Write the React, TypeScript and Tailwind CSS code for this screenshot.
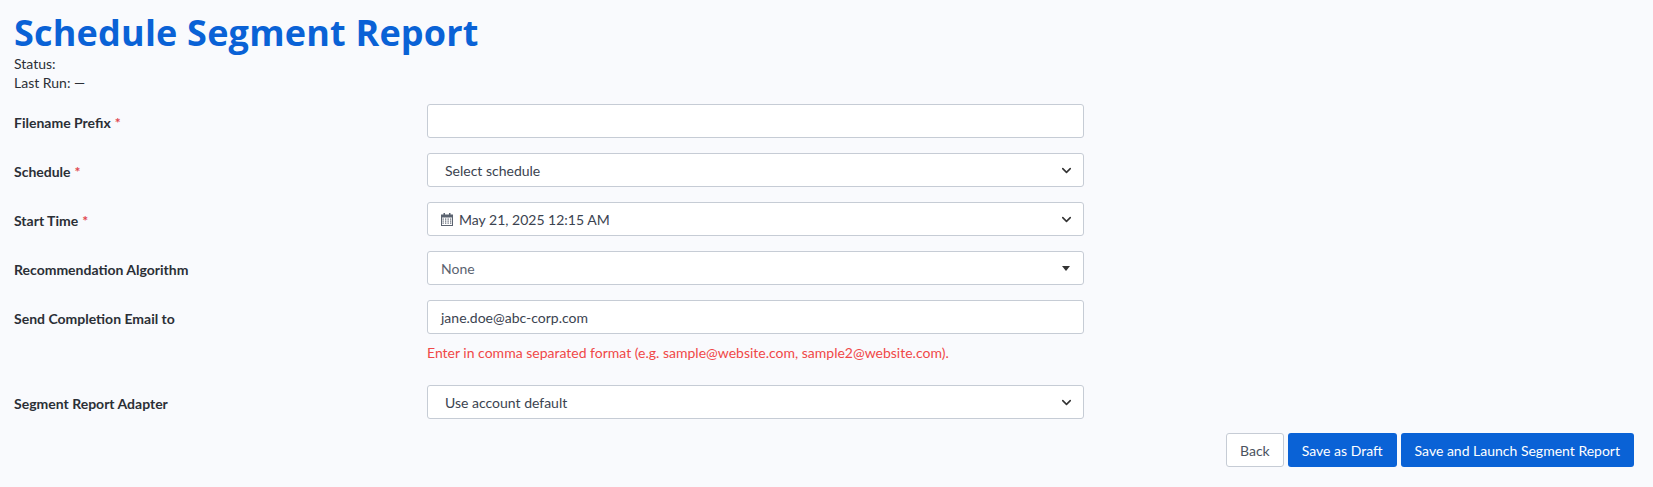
import { ChevronDown } from 'lucide-react'

const font = { fontFamily: 'Lato, "Open Sans", sans-serif' }

function Label({ text, req }: { text: string; req?: boolean }) {
  return (
    <div className="w-[413px] shrink-0 pt-[8px] text-[14px] font-bold text-[#2b2f36]">
      {text}
      {req && <span className="ml-1 text-[#e0464e]">*</span>}
    </div>
  )
}

function Box({ children, caret }: { children?: React.ReactNode; caret?: 'chev' | 'tri' }) {
  return (
    <div className="flex h-[34px] w-[657px] items-center rounded-[3px] border border-[#c6ccd5] bg-white px-[13px] text-[14px] text-[#3b4350]">
      <div className="flex flex-1 items-center gap-[6px]">{children}</div>
      {caret === 'chev' && <ChevronDown size={15} strokeWidth={2.5} className="text-[#333] -mr-[4px]" />}
      {caret === 'tri' && <span className="h-0 w-0 border-x-[4px] border-t-[5px] border-x-transparent border-t-[#333]" />}
    </div>
  )
}

function Cal() {
  return (
    <svg width="12" height="13" viewBox="0 0 12 13" className="text-[#5b6370]">
      <rect x="0.5" y="2" width="11" height="10.5" fill="none" stroke="currentColor" />
      <rect x="0.5" y="2" width="11" height="2.5" fill="currentColor" />
      <rect x="2.5" y="0" width="1.5" height="3" fill="currentColor" />
      <rect x="8" y="0" width="1.5" height="3" fill="currentColor" />
      {[5.5, 7.5, 9.5].map((y) => [2, 4.5, 7, 9.5].map((x) => <rect key={`${x}-${y}`} x={x - 0.5} y={y} width="1.3" height="1.2" fill="currentColor" />))}
    </svg>
  )
}

export default function App() {
  return (
    <div className="min-h-[487px] bg-[#f9fafd] pl-[14px] pr-[19px] pt-[12px]" style={font}>
      <h1 className="text-[36px] font-bold leading-[42px] text-[#0a62d6]" style={{ fontFamily: '"Open Sans", sans-serif', letterSpacing: '0.2px' }}>Schedule Segment Report</h1>
      <p className="text-[14px] leading-[19px] text-[#2b2f36]">Status:</p>
      <p className="text-[14px] leading-[19px] text-[#2b2f36]">Last Run: —</p>

      <div className="mt-[12px] flex flex-col gap-[15px]">
        <div className="flex"><Label text="Filename Prefix" req /><Box /></div>
        <div className="flex"><Label text="Schedule" req /><Box caret="chev"><span className="pl-[4px]">Select schedule</span></Box></div>
        <div className="flex"><Label text="Start Time" req /><Box caret="chev"><Cal /><span>May 21, 2025 12:15 AM</span></Box></div>
        <div className="flex"><Label text="Recommendation Algorithm" /><Box caret="tri"><span className="text-[#5b6370]">None</span></Box></div>
        <div className="flex">
          <Label text="Send Completion Email to" />
          <div>
            <Box><span>jane.doe@abc-corp.com</span></Box>
            <p className="mt-[8px] text-[14px] text-[#f04848]">Enter in comma separated format (e.g. sample@website.com, sample2@website.com).</p>
          </div>
        </div>
        <div className="mt-[7px] flex"><Label text="Segment Report Adapter" /><Box caret="chev"><span className="pl-[4px]">Use account default</span></Box></div>
      </div>

      <div className="mt-[14px] flex justify-end gap-[4px]">
        <button className="h-[34px] rounded-[3px] border border-[#c6ccd5] bg-white px-[13px] text-[14px] text-[#4b5360]">Back</button>
        <button className="h-[34px] rounded-[3px] bg-[#0a62d6] px-[14px] text-[14px] text-white">Save as Draft</button>
        <button className="h-[34px] rounded-[3px] bg-[#0a62d6] px-[14px] text-[14px] text-white">Save and Launch Segment Report</button>
      </div>
    </div>
  )
}
